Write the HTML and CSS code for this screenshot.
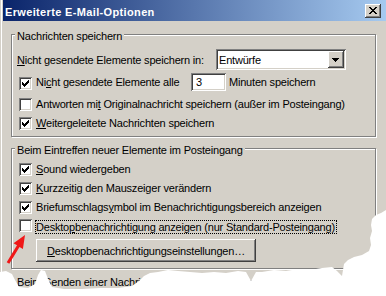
FILE: index.html
```html
<!DOCTYPE html>
<html lang="de">
<head>
<meta charset="utf-8">
<title>Erweiterte E-Mail-Optionen</title>
<link rel="stylesheet" href="styles.css">
</head>
<body>
<div class="window">
  <div class="titlebar">
    <span class="title">Erweiterte E-Mail-Optionen</span>
    <span class="close btn3d"><svg width="16" height="14" viewBox="0 0 16 14" shape-rendering="crispEdges"><path d="M4 3h2v1H4z M10 3h2v1h-2z M5 4h2v1H5z M9 4h2v1H9z M6 5h4v1H6z M7 6h2v1H7z M6 7h4v1H6z M5 8h2v1H5z M9 8h2v1H9z M4 9h2v1H4z M10 9h2v1h-2z" fill="#000"/></svg></span>
  </div>
  <div class="client">
    <section class="group g1">
      <div class="legend">Nachrichten speichern</div>
      <div class="row row-select">
        <span class="lbl lbl-select"><u>N</u>icht gesendete Elemente speichern in:</span>
        <div class="select sunken">
          <span class="select-text">Entwürfe</span>
          <span class="drop btn3d"><svg width="16" height="17" viewBox="0 0 16 17" shape-rendering="crispEdges"><path d="M4 7h7v1H4z M5 8h5v1H5z M6 9h3v1H6z M7 10h1v1H7z" fill="#000"/></svg></span>
        </div>
      </div>
      <div class="row row-edit">
        <span class="cb sunken"><svg width="13" height="13" viewBox="0 0 13 13" shape-rendering="crispEdges"><path d="M9 3h1v1H9z M8 4h2v1H8z M3 5h1v1H3z M7 5h3v1H7z M3 6h2v1H3z M6 6h3v1H6z M3 7h5v1H3z M4 8h3v1H4z M5 9h1v1H5z" fill="#000"/></svg></span>
        <span class="lbl lbl-edit">Ni<u>c</u>ht gesendete Elemente alle</span>
        <span class="edit sunken">3</span>
        <span class="lbl lbl-after">Minuten speichern</span>
      </div>
      <div class="row cbrow r3">
        <span class="cb sunken"></span>
        <span class="lbl">Antworten mi<u>t</u> Originalnachricht speichern (außer im Posteingang)</span>
      </div>
      <div class="row cbrow r4">
        <span class="cb sunken"><svg width="13" height="13" viewBox="0 0 13 13" shape-rendering="crispEdges"><path d="M9 3h1v1H9z M8 4h2v1H8z M3 5h1v1H3z M7 5h3v1H7z M3 6h2v1H3z M6 6h3v1H6z M3 7h5v1H3z M4 8h3v1H4z M5 9h1v1H5z" fill="#000"/></svg></span>
        <span class="lbl"><u>W</u>eitergeleitete Nachrichten speichern</span>
      </div>
    </section>

    <section class="group g2">
      <div class="legend">Beim Eintreffen neuer Elemente im Posteingang</div>
      <div class="row cbrow s1">
        <span class="cb sunken"><svg width="13" height="13" viewBox="0 0 13 13" shape-rendering="crispEdges"><path d="M9 3h1v1H9z M8 4h2v1H8z M3 5h1v1H3z M7 5h3v1H7z M3 6h2v1H3z M6 6h3v1H6z M3 7h5v1H3z M4 8h3v1H4z M5 9h1v1H5z" fill="#000"/></svg></span>
        <span class="lbl"><u>S</u>ound wiedergeben</span>
      </div>
      <div class="row cbrow s2">
        <span class="cb sunken"><svg width="13" height="13" viewBox="0 0 13 13" shape-rendering="crispEdges"><path d="M9 3h1v1H9z M8 4h2v1H8z M3 5h1v1H3z M7 5h3v1H7z M3 6h2v1H3z M6 6h3v1H6z M3 7h5v1H3z M4 8h3v1H4z M5 9h1v1H5z" fill="#000"/></svg></span>
        <span class="lbl"><u>K</u>urzzeitig den Mauszeiger verändern</span>
      </div>
      <div class="row cbrow s3">
        <span class="cb sunken"><svg width="13" height="13" viewBox="0 0 13 13" shape-rendering="crispEdges"><path d="M9 3h1v1H9z M8 4h2v1H8z M3 5h1v1H3z M7 5h3v1H7z M3 6h2v1H3z M6 6h3v1H6z M3 7h5v1H3z M4 8h3v1H4z M5 9h1v1H5z" fill="#000"/></svg></span>
        <span class="lbl">Briefumschlags<u>y</u>mbol im Benachrichtigungsbereich anzeigen</span>
      </div>
      <div class="row cbrow s4">
        <span class="cb sunken"></span>
        <span class="lbl focus">Deskto<u>p</u>benachrichtigung anzeigen (nur Standard-Posteingang)</span>
      </div>
      <div class="row btnrow">
        <span class="button btn3d"><u>D</u>esktopbenachrichtigungseinstellungen…</span>
      </div>
    </section>

    <section class="group g3">
      <div class="legend">Beim Senden einer Nachricht</div>
    </section>
  </div>
</div>

<svg class="overlay" width="386" height="296" viewBox="0 0 386 296">
  <path class="torn" d="M386 210 L381 213 L376 215 L372 219 L371 225 L372 231 L370 238 L371 245 L369 251 L362 255 L354 257 L348 260 L344 264 L342 276 L337 271 L332 267 L322 268 L310 270 L298 269 L286 271 L274 270 L262 272 L256 272 L251 281 L246 272 L238 271 L226 273 L214 272 L202 273 L190 272 L178 271 L168 270 L158 272 L150 273 L144 276 L139 281 L132 286 L118 288 L100 288 L82 289 L64 289 L52 287 L48 279 L45 271 L41 270 L38 275 L35 284 L28 288 L19 287 L15 280 L12 274 L6 271 L0 272 L0 296 L386 296 Z"/>
  <path class="arrow" d="M25 235 L22.9 249 L19.5 246.9 L9.3 263.8 L6.7 262.2 L17 245.3 L13.5 243.2 Z"/>
</svg>
</body>
</html>
```

FILE: styles.css
```css
* {
  box-sizing: border-box;
  margin: 0;
  padding: 0;
}

html,
body {
  width: 386px;
  height: 296px;
  overflow: hidden;
}

body {
  position: relative;
  background: #fff;
  color: #000;
  font-family: "Liberation Sans", Arial, sans-serif;
  font-size: 11px;
  line-height: 13px;
  letter-spacing: -0.2px;
}

u {
  text-decoration: underline;
  text-underline-offset: 1px;
}

.window {
  width: 386px;
  height: 296px;
  padding-left: 3px;
  background: #d4d0c8;
  box-shadow: inset 1px 0 #d4d0c8, inset 2px 0 #fff;
}

.titlebar {
  display: flex;
  align-items: flex-start;
  height: 21px;
  padding: 4px 5px 0 2px;
  background: linear-gradient(to right, #0a246a, #a6caf0);
  color: #fff;
}

.title {
  margin-top: 2px;
  font-weight: bold;
  letter-spacing: 0.35px;
}

.close {
  margin-left: auto;
  width: 16px;
  height: 14px;
}

.close svg,
.drop svg,
.cb svg {
  display: block;
}

.btn3d {
  background: #d4d0c8;
  box-shadow: inset -1px -1px #404040, inset 1px 1px #fff, inset -2px -2px #808080, inset 2px 2px #d4d0c8;
}

.sunken {
  background: #fff;
  box-shadow: inset 1px 1px #808080, inset -1px -1px #fff, inset 2px 2px #404040, inset -2px -2px #d4d0c8;
}

.client {
  padding-left: 8px;
}

.group {
  width: 365px;
  margin-top: 11px;
  border: 1px solid #808080;
  box-shadow: inset 1px 1px #fff, 1px 1px #fff;
}

.g1 {
  margin-top: 13px;
  padding-bottom: 6px;
}

.g2 {
  padding-bottom: 6px;
}

.g3 {
  height: 17px;
}

.legend {
  width: max-content;
  margin: -5px 0 0 3px;
  padding: 0 2px;
  background: #d4d0c8;
}

.row {
  display: flex;
  align-items: flex-start;
}

.lbl {
  white-space: nowrap;
}

.row-select {
  margin-top: 6px;
  padding-left: 5px;
}

.lbl-select {
  width: 199px;
  margin-top: 5px;
}

.select {
  display: flex;
  width: 130px;
  height: 21px;
  padding: 2px;
}

.select-text {
  flex: 1;
  padding: 3px 0 0 1px;
}

.drop {
  width: 16px;
  height: 17px;
}

.row-edit {
  margin-top: 3px;
  padding-left: 7px;
}

.cb {
  flex: none;
  width: 13px;
  height: 13px;
}

.row-edit .cb {
  margin-top: 4px;
}

.lbl-edit {
  width: 155px;
  margin: 3px 0 0 4px;
}

.edit {
  width: 35px;
  height: 18px;
  padding: 3px 0 0 5px;
}

.lbl-after {
  margin: 3px 0 0 3px;
}

.cbrow {
  padding-left: 7px;
}

.cbrow .lbl {
  margin-left: 4px;
}

.r3 { margin-top: 7px; }
.r4 { margin-top: 6px; }
.s1 { margin-top: 6px; }
.s2 { margin-top: 6px; }
.s3 { margin-top: 6px; }
.s4 { margin-top: 5px; }

.cbrow .focus {
  margin: 1px 0 0 3px;
  padding: 0 1px 0 0;
  border: 1px dotted #000;
  line-height: 12px;
}

.btnrow {
  margin-top: 5px;
  padding-left: 24px;
}

.button {
  display: flex;
  align-items: center;
  justify-content: center;
  width: 220px;
  height: 23px;
  padding-top: 1px;
}

.overlay {
  position: absolute;
  left: 0;
  top: 0;
  pointer-events: none;
}

.torn {
  fill: #fff;
}

.arrow {
  fill: #f01818;
}
```
